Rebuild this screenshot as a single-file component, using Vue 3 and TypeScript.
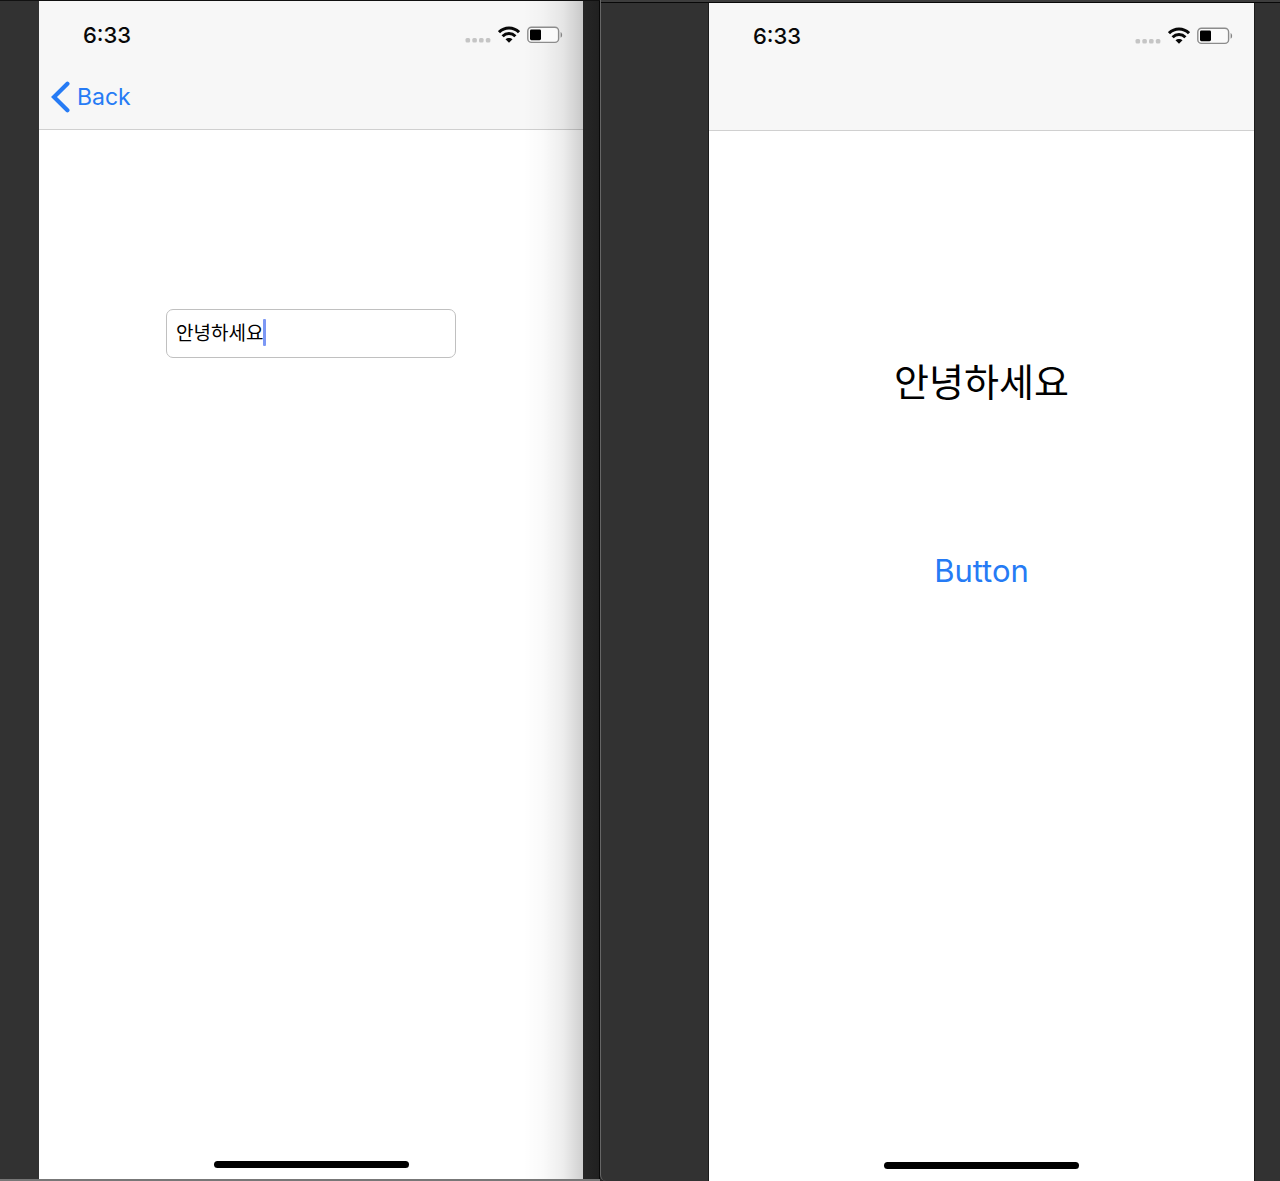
<script setup lang="ts">
import { ref } from 'vue'

const message = ref<string>('안녕하세요')
const time = '6:33'
const screens = ['editor', 'result'] as const
</script>

<template>
  <main class="desktop">
    <section v-for="screen in screens" :key="screen" class="window" :class="screen">
      <div class="phone">
        <header class="top">
          <div class="status">
            <span class="time">{{ time }}</span>
            <div class="indicators">
              <svg width="26" height="18" viewBox="0 0 26 18" fill="#c5c5c5" aria-hidden="true">
                <rect x="0.5" y="12" width="4.6" height="4.6" rx="1.5" />
                <rect x="7.3" y="12" width="4.6" height="4.6" rx="1.5" />
                <rect x="14" y="12" width="4.6" height="4.6" rx="1.5" />
                <rect x="20.8" y="12" width="4.6" height="4.6" rx="1.5" />
              </svg>
              <svg width="22" height="18" viewBox="0 0 22 18" aria-hidden="true">
                <g fill="none" stroke="#080808" stroke-width="3">
                  <path d="M1 6.2C6.7.6 15.3.6 21 6.2" />
                  <path d="M4.6 10.3c3.6-3.6 9.2-3.6 12.8 0" />
                </g>
                <path d="M7.5 13.3c1.9-1.9 5.1-1.9 7 0L11 16.8Z" fill="#080808" />
              </svg>
              <svg width="36" height="18" viewBox="0 0 36 18" aria-hidden="true">
                <rect x="0.8" y="1.2" width="30.8" height="15.2" rx="3.7" fill="#fafafa" stroke="#8c8c8c" stroke-width="1.4" />
                <rect x="3" y="3.4" width="11" height="10.8" rx="1.4" fill="#000" />
                <path d="M33.6 6c2 .8 2 5 0 5.8Z" fill="#858585" />
              </svg>
            </div>
          </div>
          <nav v-if="screen === 'editor'" class="nav">
            <button type="button" class="back">
              <svg width="20" height="32" viewBox="0 0 20 32" aria-hidden="true">
                <path d="M16.4 2.8 3 16l13.4 13.2" fill="none" stroke="#267bf5" stroke-width="4.2" stroke-linecap="round" stroke-linejoin="miter" />
              </svg>
              Back
            </button>
          </nav>
        </header>

        <div v-if="screen === 'editor'" class="content">
          <div class="field">
            <input v-model="message" type="text" aria-label="Message" />
            <span class="caret"></span>
          </div>
        </div>
        <div v-else class="content">
          <p class="label">{{ message }}</p>
          <button type="button" class="action">Button</button>
        </div>
        <div class="home"></div>
      </div>
    </section>
  </main>
</template>

<style>
body {
  margin: 0;
  background: #323232;
}
</style>

<style scoped>
* {
  box-sizing: border-box;
}

.desktop {
  display: grid;
  grid-template-columns: 600fr 680fr;
  min-height: 100vh;
  background: #252525;
  font-family: Inter, "Noto Sans CJK KR", sans-serif;
}

.window {
  display: grid;
  background: #323232;
}

.editor {
  grid-template-columns: 39fr 544fr 17fr;
  border-top: 1px solid #111;
  border-bottom: 2px solid #777;
  background: linear-gradient(90deg, #323232 50%, #272727 97%, #202020);
  box-shadow: inset -1px 0 #080808;
}

.result {
  grid-template-columns: 108fr 545fr 26fr;
  padding-top: 3px;
  border-left: 1px solid #666;
  border-bottom-left-radius: 6px;
  background: linear-gradient(#3d3d3d 2px, #080808 2px, #080808 3px, #323232 3px);
}

.phone {
  grid-column: 2;
  display: flex;
  flex-direction: column;
  background: #fff;
}

.editor .phone {
  background: linear-gradient(90deg, transparent calc(100% - 60px), #00000005 calc(100% - 40px), #00000012 calc(100% - 20px), #00000030) #fff;
}

.result .phone {
  box-shadow: -1px 0 #1c1c1c, 1px 0 #1c1c1c;
}

.top {
  height: 129px;
  border-bottom: 1px solid #00000028;
  background: #00000008;
}

.result .top {
  height: 128px;
}

.status {
  display: flex;
  align-items: center;
  justify-content: space-between;
  height: 68px;
  padding: 0 20px 0 44px;
}

.result .status {
  height: 66px;
  padding-right: 21px;
}

.time {
  font-size: 22px;
  font-weight: 500;
  color: #080808;
}

.indicators {
  display: flex;
  gap: 7px;
}

.nav {
  padding-left: 12px;
}

.back {
  display: flex;
  align-items: center;
  gap: 6px;
  height: 56px;
  padding: 0;
  border: 0;
  background: none;
  font: 23px Inter, sans-serif;
  color: #267bf5;
}

.content {
  display: flex;
  flex: 1;
  flex-direction: column;
  align-items: center;
}

.field {
  position: relative;
  width: 290px;
  margin-top: 179px;
}

.field input {
  display: block;
  width: 100%;
  height: 49px;
  padding: 0 9px 4px;
  border: 1px solid #c0c0c0;
  border-radius: 7px;
  outline: 0;
  background: #fff;
  font: 19px "Noto Sans CJK KR", sans-serif;
  color: #000;
}

.caret {
  position: absolute;
  top: 10px;
  left: 97px;
  width: 3px;
  height: 27px;
  border-radius: 1px;
  background: #7c98f5;
}

.label {
  margin: 222px 0 0;
  font-size: 38px;
  font-weight: 400;
  line-height: 58px;
  color: #000;
}

.action {
  margin-top: 138px;
  padding: 0;
  border: 0;
  background: none;
  font: 31px/44px Inter, sans-serif;
  color: #267bf5;
}

.home {
  align-self: center;
  width: 195px;
  height: 7px;
  margin-bottom: 12px;
  border-radius: 4px;
  background: #000;
}

.editor .home {
  margin-bottom: 11px;
}
</style>
